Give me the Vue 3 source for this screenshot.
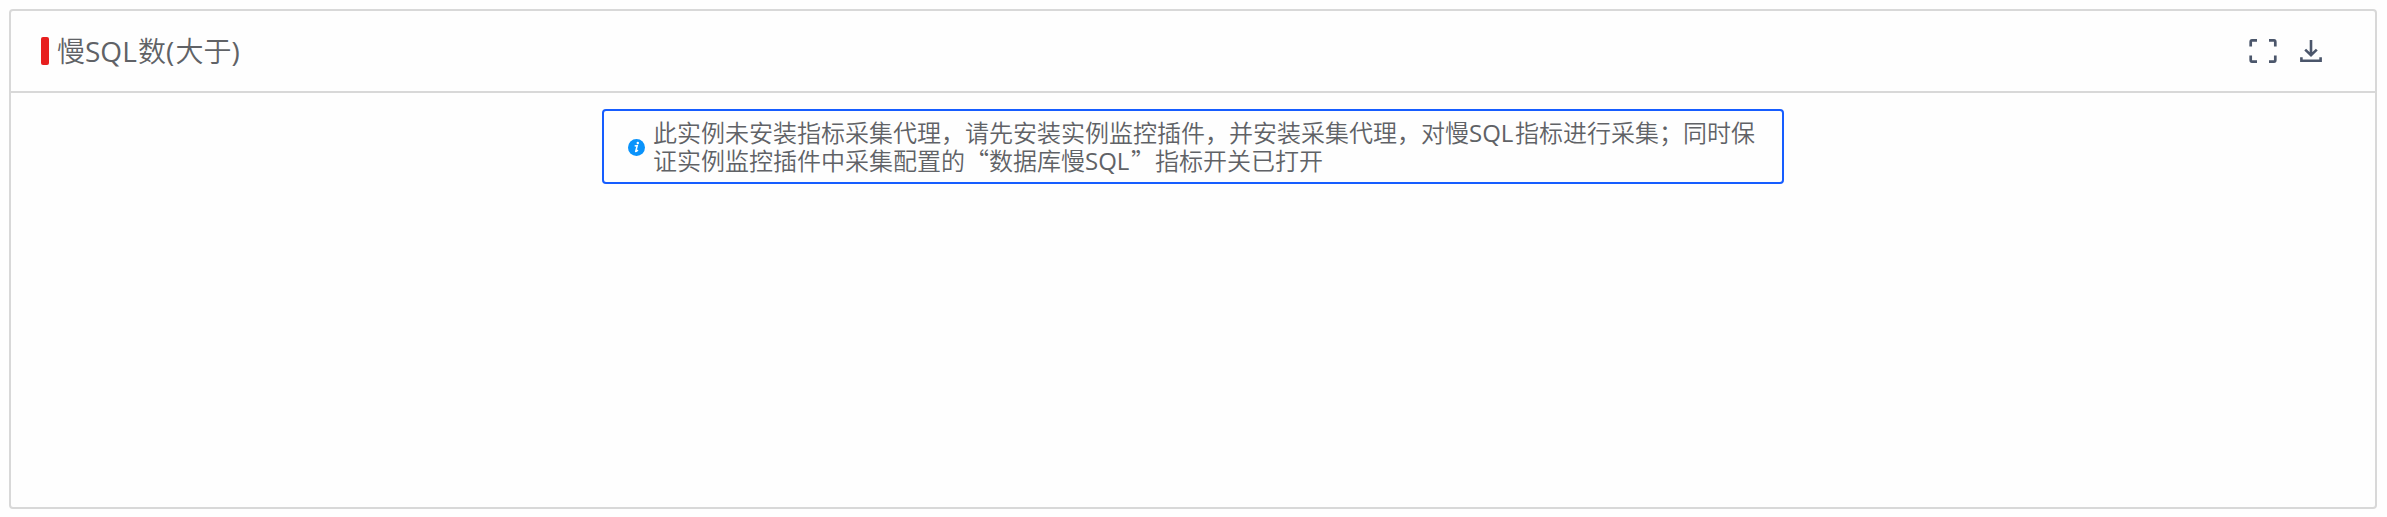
<script setup>
const title = { before: '慢', latin: 'SQL', after: '数', open: '(', inner: '大于', close: ')' }
</script>

<template>
  <section class="panel">
    <header class="head">
      <span class="mark"></span>
      <h1 class="title">{{ title.before }}<span class="lat">{{ title.latin }}</span>{{ title.after }}<span class="paren">{{ title.open }}</span>{{ title.inner }}<span class="paren">{{ title.close }}</span></h1>
      <div class="tools">
        <svg class="full" width="28" height="24" viewBox="0 0 28 24" fill="none" stroke="#4b566b" stroke-width="2.7">
          <path d="M8 1.4H3Q1.7 1.4 1.7 3V7.5M20 1.4H25Q26.3 1.4 26.3 3V7.5M8 22.6H3Q1.7 22.6 1.7 21V16.5M20 22.6H25Q26.3 22.6 26.3 21V16.5" />
        </svg>
        <svg class="down" width="22" height="22" viewBox="0 0 22 22" fill="none" stroke="#4b566b" stroke-width="2.6">
          <path d="M11 0V15M5.2 9.6L11 15.2L16.8 9.6M1.4 17.2V20.7H20.6V17.2" />
        </svg>
      </div>
    </header>
    <div class="body">
      <div class="notice">
        <svg class="info" width="17" height="17" viewBox="0 0 17 17">
          <circle cx="8.5" cy="8.5" r="8.5" fill="#0a93fb" />
          <path d="M6.7 7.1L9.2 6.6L7.7 12.4Q8.3 12.9 9.9 11" fill="none" stroke="#fff" stroke-width="1.5" />
          <circle cx="9.8" cy="4" r="1.2" fill="#fff" />
        </svg>
        <div class="text">
          <p class="line">此实例未安装指标采集代理，请先安装实例监控插件，并安装采集代理，对慢<span class="lat">SQL</span>指标进行采集；同时保</p>
          <p class="line">证实例监控插件中采集配置的“数据库慢<span class="lat">SQL</span>”指标开关已打开</p>
        </div>
      </div>
    </div>
  </section>
</template>

<style>
body {
  background: #fefefe;
}
</style>

<style scoped>
.panel {
  box-sizing: border-box;
  width: 2368px;
  height: 500px;
  margin: 9px;
  border: 2px solid #d8d8d8;
  border-radius: 4px;
  background: #fefefe;
  color: #606266;
  font-family: "Noto Sans CJK SC", sans-serif;
}
.head {
  box-sizing: border-box;
  display: flex;
  align-items: center;
  height: 82px;
  padding: 0 53px 0 30px;
  border-bottom: 2px solid #d8d8d8;
}
.mark {
  width: 8px;
  height: 28px;
  border-radius: 2px;
  background: #e71f1f;
}
.title {
  height: 40px;
  margin: 0 0 2px 8px;
  font-size: 28px;
  font-weight: 350;
  line-height: 40px;
  white-space: nowrap;
}
.lat,
.paren {
  display: inline-block;
  font-family: "Open Sans", sans-serif;
  font-weight: 380;
  line-height: 1;
}
.title .lat {
  width: 53px;
}
.title .paren {
  width: 9.5px;
}
.tools {
  display: flex;
  align-items: center;
  gap: 23px;
  margin-left: auto;
}
.body {
  display: flex;
  justify-content: center;
  padding-top: 16px;
}
.notice {
  box-sizing: border-box;
  display: flex;
  align-items: center;
  width: 1182px;
  height: 75px;
  padding-left: 24px;
  border: 2px solid #165dff;
  border-radius: 4px;
}
.info {
  margin-top: 1px;
}
.text {
  margin: 0 0 2px 8px;
}
.line {
  height: 28px;
  margin: 0;
  font-size: 24px;
  font-weight: 350;
  line-height: 28px;
  white-space: nowrap;
}
.line .lat {
  width: 46px;
}
</style>
